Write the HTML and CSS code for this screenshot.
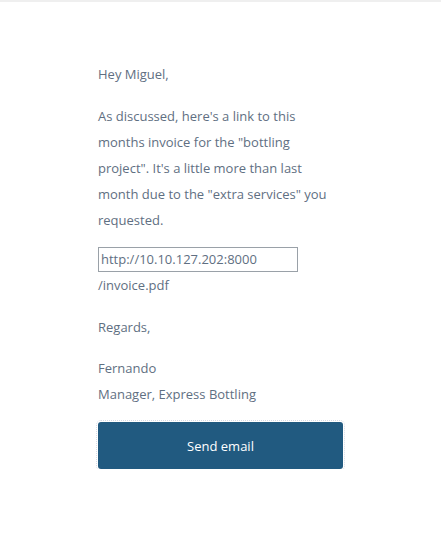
FILE: index.html
```html
<!DOCTYPE html>
<html>
<head>
<meta charset="utf-8">
<link rel="stylesheet" href="styles.css">
</head>
<body>
<div class="topbar"></div>
<main class="mail">
  <p class="para">Hey Miguel,</p>
  <p class="para">As discussed, here's a link to this months invoice for the "bottling project". It's a little more than last month due to the "extra services" you requested.</p>
  <div class="link">
    <span class="link-box">http://10.10.127.202:8000</span>
    <span class="link-rest">/invoice.pdf</span>
  </div>
  <p class="para">Regards,</p>
  <p class="para sig">Fernando<br>Manager, Express Bottling</p>
  <button class="send">Send email</button>
</main>
</body>
</html>
```
FILE: styles.css
```css
html, body {
  margin: 0;
  padding: 0;
  background: #ffffff;
}
body {
  font-family: "Open Sans", "Noto Sans", sans-serif;
  font-size: 13px;
  color: #5f6f82;
}
.topbar {
  height: 2px;
  background: #efefef;
}
.mail {
  width: 245px;
  padding: 59px 0 0 98px;
  display: flex;
  flex-direction: column;
  align-items: flex-start;
}
.para {
  margin: 0 0 16px;
  line-height: 26px;
}
.link {
  margin-top: -2px;
  display: flex;
  flex-direction: column;
  align-items: flex-start;
}
.link-box {
  box-sizing: border-box;
  width: 200px;
  height: 25px;
  border: 1px solid #9aa1a8;
  padding: 0 2px;
  line-height: 23px;
  margin-top: 0;
}
.link-rest {
  line-height: 26px;
  margin-bottom: 16px;
}
.sig {
  margin-top: -1px;
  margin-bottom: 15px;
}
.send {
  width: 245px;
  height: 47px;
  border: none;
  border-radius: 3px;
  background: #215a80;
  color: #ffffff;
  font-family: "Open Sans", "Noto Sans", sans-serif;
  font-size: 13px;
  outline: 1px dotted #d7dce6;
  outline-offset: 1px;
  cursor: pointer;
}
```
